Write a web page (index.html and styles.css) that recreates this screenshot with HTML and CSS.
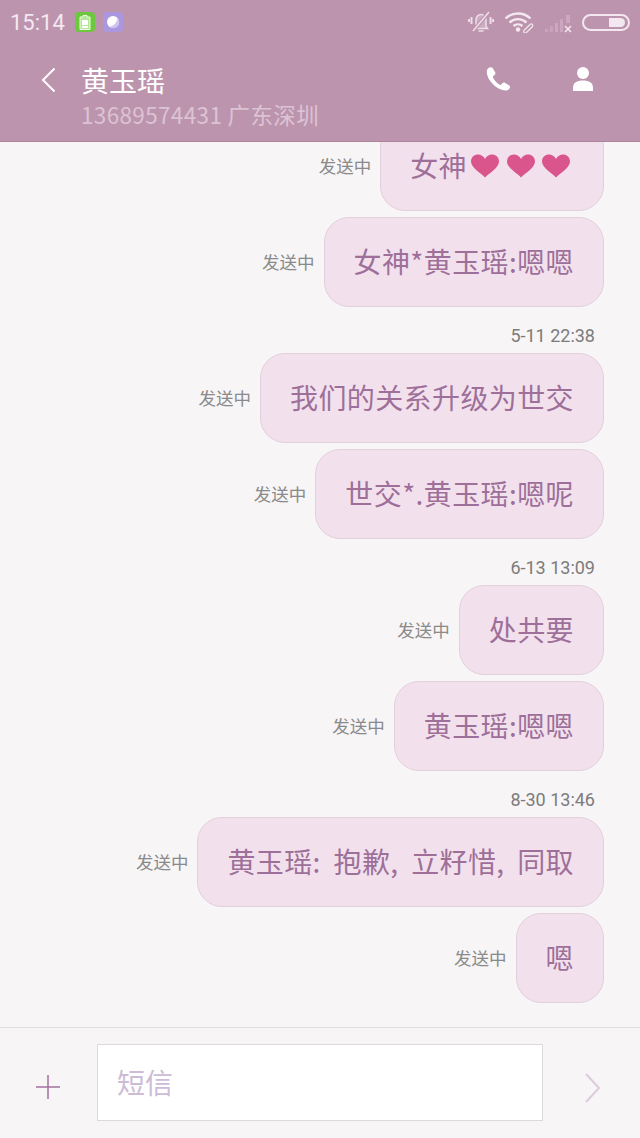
FILE: index.html
```html
<!DOCTYPE html>
<html lang="zh-CN">
<head>
    <meta charset="UTF-8">
    <meta name="viewport" content="width=device-width, initial-scale=1.0">
    <title>黄玉瑶</title>
    <link rel="stylesheet" href="styles.css">
</head>
<body>
    <div class="phone">
        <header class="top">
            <div class="status">
                <span class="clock">15:14</span>
                <span class="app-icon green">
                    <svg width="12" height="15" viewBox="0 0 12 15"><path d="M4 .5h4V2h3v12.500H1V2h3z" fill="#b5e596" stroke="#eef9e4" stroke-width="1"/><rect x="3" y="5" width="6" height="5" fill="#fff"/><rect x="3" y="11" width="6" height="2" fill="#fff"/></svg>
                </span>
                <span class="app-icon purple">
                    <svg width="14" height="14" viewBox="0 0 14 14"><circle cx="7" cy="7" r="6" fill="#fff"/><path d="M11.500 3a6 6 0 0 1-8.500 8.500a9 9 0 0 0 8.500-8.500z" fill="#cfc4ee"/></svg>
                </span>
                <div class="status-right">
                    <svg class="st-bell" width="26" height="22" viewBox="0 0 26 22" fill="none" stroke="#ecdde8">
                        <path d="M8 15.500v-7a5 5 0 0 1 10 0v7l1.500 2h-13z" fill="#ecdde8" fill-opacity=".35" stroke-width="1.500"/>
                        <path d="M10.500 20h5" stroke-width="1.500"/>
                        <path d="M3.500 6v7M22.500 6v7M1 8v3M25 8v3" stroke-width="2"/>
                        <path d="M21 1L5 20" stroke="#bd94ae" stroke-width="4"/>
                        <path d="M21 1L5 20" stroke-width="1.600"/>
                    </svg>
                    <svg class="st-wifi" width="30" height="22" viewBox="0 0 30 22" fill="none" stroke="#f3e8f0" stroke-width="2.400">
                        <path d="M1.500 7.500a18 18 0 0 1 25 0"/>
                        <path d="M5.500 11.500a12.500 12.500 0 0 1 17 0"/>
                        <path d="M9.500 15a7 7 0 0 1 9 0"/>
                        <circle cx="14" cy="18.500" r="2.200" fill="#f3e8f0" stroke="none"/>
                        <path d="M20 19.500l6-6a1.500 1.500 0 0 1 2.500 2l-6 6a1.500 1.500 0 0 1-2.500-2z" stroke-width="1.200"/>
                    </svg>
                    <svg class="st-signal" width="28" height="22" viewBox="0 0 28 22">
                        <rect x="1" y="18" width="3" height="3" fill="#c9a5bd"/>
                        <rect x="6" y="15" width="3" height="6" fill="#c9a5bd"/>
                        <rect x="11" y="12" width="3" height="9" fill="#cba8c0"/>
                        <rect x="16" y="8" width="3" height="13" fill="#cba8c0"/>
                        <rect x="22" y="4" width="4" height="8" fill="#cba8c0"/>
                        <path d="M21 15l6 6M27 15l-6 6" stroke="#f3e8f0" stroke-width="1.500"/>
                    </svg>
                    <div class="battery"><div class="battery-level"></div></div>
                </div>
            </div>
            <div class="nav">
                <svg class="back" width="16" height="26" viewBox="0 0 16 26" fill="none" stroke="#fff" stroke-width="2"><path d="M14.500 1.500L3 13l11.500 11.500"/></svg>
                <div class="contact">
                    <div class="contact-name">黄玉瑶</div>
                    <div class="contact-sub">13689574431 广东深圳</div>
                </div>
                <svg class="call" width="26" height="26" viewBox="0 0 26 26"><path d="M5.500 1.200c-1.500 0-3.800 1.700-3.800 4.500 0 4 2.500 8.800 6.300 12.600 4 3.900 8.400 6.300 12.500 6.300 2.700 0 4.500-2 4.500-3.600 0-.8-.3-1.300-1-1.700l-3.800-2.400c-1-.6-2-.5-2.800.4l-1.100 1.300c-.5.500-1 .6-1.600.2-1.500-.9-3-2.100-4.200-3.500-1-1.100-1.900-2.400-2.500-3.700-.3-.6-.2-1.100.3-1.500l1.300-1.100c.9-.8 1-1.800.5-2.800L8 2.500c-.5-.9-1.300-1.300-2.500-1.300z" fill="#fff"/></svg>
                <svg class="person" width="22" height="26" viewBox="0 0 22 26"><circle cx="11" cy="7" r="6" fill="#fff"/><path d="M1 25v-3.500c0-4.500 4-7 10-7s10 2.500 10 7V25z" fill="#fff"/></svg>
            </div>
        </header>

        <main class="thread">
            <div class="msg"><span class="sending">发送中</span><div class="bubble">女神<svg class="heart first" width="28" height="24" viewBox="0 0 28 24"><use href="#heart"/></svg><svg class="heart" width="28" height="24" viewBox="0 0 28 24"><use href="#heart"/></svg><svg class="heart last" width="28" height="24" viewBox="0 0 28 24"><use href="#heart"/></svg></div></div>
            <div class="msg"><span class="sending">发送中</span><div class="bubble">女神*黄玉瑶:嗯嗯</div></div>
            <div class="time">5-11 22:38</div>
            <div class="msg"><span class="sending">发送中</span><div class="bubble">我们的关系升级为世交</div></div>
            <div class="msg"><span class="sending">发送中</span><div class="bubble">世交*.黄玉瑶:嗯呢</div></div>
            <div class="time">6-13 13:09</div>
            <div class="msg"><span class="sending">发送中</span><div class="bubble">处共要</div></div>
            <div class="msg"><span class="sending">发送中</span><div class="bubble">黄玉瑶:嗯嗯</div></div>
            <div class="time">8-30 13:46</div>
            <div class="msg"><span class="sending">发送中</span><div class="bubble spaced">黄玉瑶: 抱歉, 立籽惜, 同取</div></div>
            <div class="msg"><span class="sending">发送中</span><div class="bubble">嗯</div></div>
        </main>

        <footer class="composer">
            <svg class="plus" width="26" height="26" viewBox="0 0 26 26" stroke="#a5709f" stroke-width="1.500"><path d="M13 1v24M1 13h24"/></svg>
            <div class="input">短信</div>
            <svg class="send" width="18" height="30" viewBox="0 0 18 30" fill="none" stroke="#dccbd9" stroke-width="2"><path d="M2 1l13 14L2 29"/></svg>
        </footer>
    </div>

    <svg class="defs" width="0" height="0">
        <symbol id="heart" viewBox="0 0 28 24"><path d="M14 23.500C10 19 0 14 0 7.500 0 3 3.500.5 7 .5c3 0 5.500 1.500 7 4.500 1.500-3 4-4.500 7-4.500 3.500 0 7 2.500 7 7 0 6.500-10 11.500-14 16z"/></symbol>
    </svg>
</body>
</html>
```

FILE: styles.css
```css
* {
    box-sizing: border-box;
}

html, body {
    margin: 0;
    padding: 0;
}

body {
    font-family: "Noto Sans CJK SC", "Noto Sans", sans-serif;
    background-color: #f7f5f6;
}

.phone {
    width: 640px;
    height: 1138px;
    display: flex;
    flex-direction: column;
    overflow: hidden;
}

.defs {
    display: block;
}

.top {
    height: 142px;
    flex-shrink: 0;
    background-color: #bd94ae;
    border-bottom: 1px solid #ad84a0;
}

.status {
    height: 44px;
    display: flex;
    align-items: center;
    padding: 0 10px;
}

.clock {
    font-family: "Roboto", sans-serif;
    font-size: 22px;
    color: #f3e8f0;
    width: 65px;
}

.app-icon {
    width: 20px;
    height: 20px;
    border-radius: 4px;
    margin-right: 8px;
    display: flex;
    align-items: center;
    justify-content: center;
}

.green {
    background-color: #6cc83c;
}

.purple {
    background-color: #ab96e0;
}

.status-right {
    margin-left: auto;
    display: flex;
    align-items: center;
}

.st-bell {
    margin-right: 10px;
}

.st-wifi {
    margin-right: 10px;
}

.st-signal {
    margin-right: 10px;
}

.battery {
    width: 48px;
    height: 17px;
    border: 2px solid #f3e8f0;
    border-radius: 9px;
    padding: 2px 3px 2px 0;
    display: flex;
    justify-content: flex-end;
}

.battery-level {
    width: 16px;
    background-color: #f3e8f0;
    border-radius: 0 5px 5px 0;
}

.nav {
    display: flex;
    align-items: flex-start;
    padding-top: 16px;
}

.back {
    margin: 7px 0 0 40px;
}

.contact {
    margin-left: 25px;
    flex: 1;
}

.contact-name {
    font-size: 28px;
    line-height: 40px;
    color: #fff;
}

.contact-sub {
    font-size: 22.500px;
    letter-spacing: 0.350px;
    line-height: 29px;
    color: #dcc3d4;
}

.call {
    margin: 6px 0 0 0;
}

.person {
    margin: 6px 46px 0 61px;
}

.thread {
    flex: 1;
    min-height: 0;
    display: flex;
    flex-direction: column;
    justify-content: flex-end;
    overflow: hidden;
    padding: 0 36px 24px 0;
}

.msg {
    display: flex;
    justify-content: flex-end;
    align-items: center;
    flex-shrink: 0;
    margin-top: 6px;
}

.sending {
    font-size: 17.500px;
    color: #8a8a8a;
    margin: 0 9px 2px 0;
}

.bubble {
    height: 90px;
    padding: 0 29px 2px 29px;
    display: flex;
    align-items: center;
    font-size: 28px;
    letter-spacing: 0.400px;
    color: #9d6f99;
    background-color: #f2e1ed;
    border: 1px solid #e2d0dc;
    border-radius: 25px;
}

.spaced {
    word-spacing: 6px;
}

.heart {
    fill: #d9558b;
    margin: 2px 0 0 7.500px;
}

.heart.first {
    margin-left: 4px;
}

.heart.last {
    margin-right: 4px;
}

.time {
    flex-shrink: 0;
    margin-top: 17px;
    margin-bottom: -1px;
    padding-right: 9px;
    text-align: right;
    font-family: "Roboto", sans-serif;
    font-size: 18px;
    line-height: 24px;
    color: #7c7c7c;
}

.composer {
    height: 111px;
    flex-shrink: 0;
    border-top: 1px solid #dfdcdf;
    display: flex;
    align-items: flex-start;
    padding-top: 16px;
}

.plus {
    margin: 30px 0 0 35px;
}

.input {
    width: 446px;
    height: 77px;
    margin-left: 36px;
    padding-left: 19px;
    background-color: #fff;
    border: 1px solid #dcdadc;
    font-size: 28px;
    line-height: 74px;
    color: #cdbcd6;
}

.send {
    margin: 29px 0 0 41px;
}
```
